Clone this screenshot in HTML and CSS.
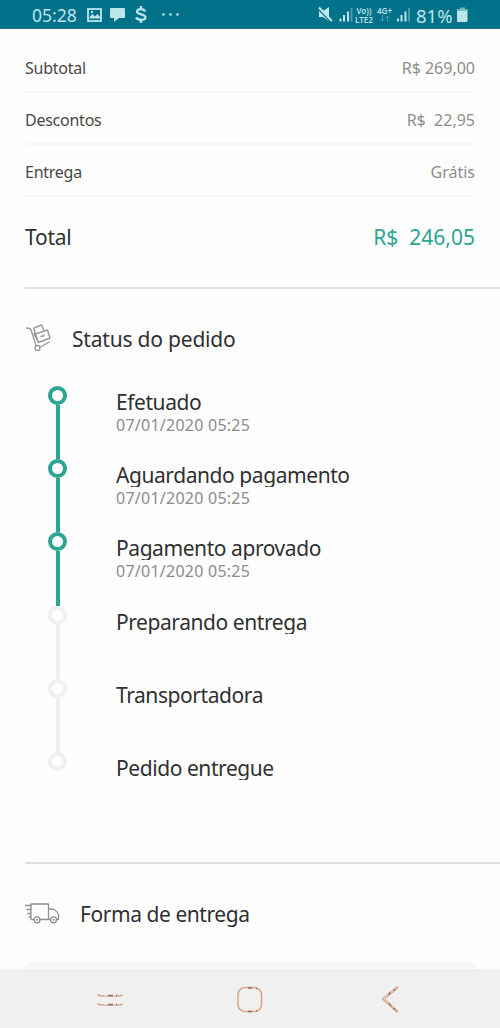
FILE: index.html
```html
<!DOCTYPE html>
<html lang="pt-BR">
<head>
<meta charset="utf-8">
<title>Status do pedido</title>
<link rel="stylesheet" href="styles.css">
</head>
<body>
<div class="screen">
  <header class="statusbar">
    <span class="clock">05:28</span>
    <svg class="notifications" width="98" height="28" viewBox="0 0 98 28" fill="none">
      <rect x="1" y="9" width="13" height="12" stroke="#bce5ec" stroke-width="1.800"/>
      <path d="M2.500 18.500V17l3-3 2.500 2.500 2.500-2.500 2.500 3v1.500z" fill="#bce5ec"/><circle cx="5" cy="12" r="1.200" fill="#bce5ec"/>
      <path d="M24 8h13q1 0 1 1v8q0 1-1 1h-5l-5 4v-4h-3q-1 0-1-1V9q0-1 1-1z" fill="#bce5ec"/>
      <path d="M58 11.500C57 8.500 50 8.300 50 11.500S58.500 14 58.500 17.400 51 20.500 49 17.500M54 6v3M54 20v3" stroke="#bce5ec" stroke-width="2.300"/>
      <g fill="#bce5ec"><circle cx="76.500" cy="14.500" r="1.300"/><circle cx="83.500" cy="14.500" r="1.300"/><circle cx="90.500" cy="14.500" r="1.300"/></g>
    </svg>
    <svg class="signal" width="36" height="28" viewBox="0 0 36 28" fill="none">
      <path d="M1 11h4l6-4v14l-6-4H1z" fill="#bce5ec"/>
      <path d="M0 9l13 13" stroke="#02718a" stroke-width="1.500"/><path d="M1 7.500l13 13.500" stroke="#bce5ec" stroke-width="2"/>
      <path d="M22.500 18.500v3M26 15v6.500M30 11.500v10" stroke="#bce5ec" stroke-width="2"/><path d="M33.500 8v13.500" stroke="#4b9dac" stroke-width="2"/>
    </svg>
    <span class="network volte"><span>Vo))</span><span>LTE2</span></span>
    <span class="network data"><span>4G+</span>
      <svg width="10" height="7" viewBox="0 0 10 7" fill="none" stroke="#4b9dac"><path d="M2.500 0v6M.5 4l2 2 2-2M7.500 7V1M5.500 3l2-2 2 2"/></svg>
    </span>
    <svg class="bars" width="14" height="28" viewBox="0 0 14 28" fill="none">
      <path d="M1 18.500v3M4.500 15v6.500M8.500 11.500v10" stroke="#bce5ec" stroke-width="2"/><path d="M12 8v13.500" stroke="#4b9dac" stroke-width="2"/>
    </svg>
    <span class="charge">81%</span>
    <svg class="battery" width="11" height="28" viewBox="0 0 11 28"><path d="M3 7.500h5V10H3z" fill="#6fb5c1"/><rect x="0" y="9" width="10.500" height="13" rx="1" fill="#bce5ec"/><path d="M0 9h10.500v2H0z" fill="#75b9c5"/></svg>
  </header>

  <main class="content">
    <section class="summary">
      <div class="line"><span class="label">Subtotal</span><span class="amount">R$ 269,00</span></div>
      <div class="line"><span class="label">Descontos</span><span class="amount">R$&nbsp; 22,95</span></div>
      <div class="line"><span class="label">Entrega</span><span class="amount">Grátis</span></div>
      <div class="total"><span class="label">Total</span><span class="grand">R$&nbsp; 246,05</span></div>
    </section>

    <section class="panel order">
      <div class="heading">
        <svg width="27" height="30" viewBox="0 0 27 30" fill="none" stroke="#999" stroke-width="1.400" stroke-linejoin="round" stroke-linecap="round">
          <path d="M1.500 4l3 .5q1 .3 1.500 1.500L11 21.500M14.500 23.500L24.500 18"/><circle cx="12.500" cy="24" r="2.500"/>
          <path d="M10.500 10L22.500 6 25 14 13.500 18.500zM10 9.500L9 4 16.500 .8 19 6.800M16 12.500l3-1M9 10l4.500 8.500"/>
        </svg>
        <h2>Status do pedido</h2>
      </div>
      <ol class="timeline">
        <li class="step done"><span class="track"><i class="dot"></i></span><div><h3>Efetuado</h3><time>07/01/2020 05:25</time></div></li>
        <li class="step done"><span class="track"><i class="dot"></i></span><div><h3>Aguardando pagamento</h3><time>07/01/2020 05:25</time></div></li>
        <li class="step done"><span class="track"><i class="dot"></i></span><div><h3>Pagamento aprovado</h3><time>07/01/2020 05:25</time></div></li>
        <li class="step"><span class="track"><i class="dot"></i></span><div><h3>Preparando entrega</h3></div></li>
        <li class="step"><span class="track"><i class="dot"></i></span><div><h3>Transportadora</h3></div></li>
        <li class="step last"><span class="track"><i class="dot"></i></span><div><h3>Pedido entregue</h3></div></li>
      </ol>
    </section>

    <section class="panel delivery">
      <div class="heading">
        <svg width="35" height="24" viewBox="0 0 35 24" fill="none" stroke="#8f8f8f" stroke-width="1.300" stroke-linejoin="round">
          <path d="M9 17.500H6V2h17.500v15.500H15M23.500 7h4.500q5 2.500 5.500 6v4.500h-2M23.500 17.500h2M0 3.500h6M1.500 7.500H6M2.500 11.500H6M4 15h2"/>
          <circle cx="12" cy="17.800" r="3"/><circle cx="28.500" cy="17.800" r="3"/><circle cx="12" cy="17.800" r=".4"/><circle cx="28.500" cy="17.800" r=".4"/>
        </svg>
        <h2>Forma de entrega</h2>
      </div>
      <div class="card"></div>
    </section>
  </main>

  <nav class="navbar">
    <svg width="500" height="59" viewBox="0 0 500 59" fill="none">
      <g stroke="#d2a78f" stroke-width="1.700" stroke-linecap="round">
        <path d="M98 26q2 1 4 1h17q2 0 3-1M98 35q2 1 4 1h17q2 0 3-1"/>
        <rect x="238" y="18.500" width="23.500" height="24" rx="7"/>
        <path d="M397 18.500L383.500 30 397 42.500" stroke-width="2.500"/>
      </g>
      <g stroke="#f1d8c7" stroke-width="1"><path d="M104 26.500h13M104 35.500h13"/><rect x="239" y="19.500" width="21.500" height="22" rx="6"/><path d="M396 19L384 30 396 41.500"/></g>
      <g stroke="#8a7168" stroke-width="1.300"><path d="M108 26.500h5M108 35.500h5M116 26.500h1M116 35.500h1M248 19h4M256 19.500h1M248 42.500h4M256 42h1M390 23l-1 3M394 20l1 2M389 34l2 3M394 39l1 2"/></g>
    </svg>
  </nav>
</div>
</body>
</html>
```
FILE: styles.css
```css
* { box-sizing: border-box; }
body { margin: 0; background: #fefefe; font-family: "Noto Sans", sans-serif; color: #303030; }
h2, h3, ol { margin: 0; padding: 0; font-weight: 400; }
svg { display: block; flex: none; }
.screen { width: 500px; height: 1028px; display: flex; flex-direction: column; overflow: hidden; }

.statusbar { flex: none; height: 29px; display: flex; align-items: flex-start; padding-left: 32px; background: #02718a; border-bottom: 1px solid #1e7384; color: #bce5ec; white-space: nowrap; }
.clock { width: 55px; font-size: 17.500px; line-height: 31px; }
.signal { margin-left: 133px; }
.network { display: flex; flex-direction: column; font-size: 8px; font-weight: 600; line-height: 9px; padding-top: 6px; }
.volte { width: 22px; margin-left: -1px; align-items: center; }
.data { width: 17px; margin-left: 1px; align-items: center; }
.bars { margin-left: 4px; }
.charge { width: 41px; margin-left: 5px; font-size: 18.500px; line-height: 31px; }

.content { flex: 1; min-height: 0; overflow: hidden; padding: 12px 0 0 25px; }
.summary { padding-right: 25px; }
.line { height: 52px; display: flex; justify-content: space-between; border-bottom: 2px solid #f8f8f8; font-size: 16px; line-height: 54px; color: #484848; }
.label { letter-spacing: -.25px; }
.amount { color: #8d8d8d; }
.total { height: 90px; display: flex; justify-content: space-between; font-size: 21px; line-height: 80px; }
.grand { color: #2da590; }

.panel { border-top: 2px solid #dfdfdf; }
.heading { display: flex; align-items: center; }
.heading h2 { font-size: 21px; line-height: 30px; white-space: nowrap; }
.order { height: 575px; padding-top: 35px; }
.order .heading { gap: 20px; letter-spacing: -.2px; }

.timeline { list-style: none; padding: 32px 0 0 23px; }
.step { height: 73.200px; display: flex; gap: 49px; }
.track { flex: none; width: 19px; display: flex; flex-direction: column; align-items: center; }
.track::after { content: ""; width: 4px; flex: 1; background: #efefef; }
.done .track::after { background: #2da590; }
.last .track::after { display: none; }
.dot { flex: none; width: 19px; height: 19px; border: 4px solid #eff0f0; border-radius: 50%; }
.done .dot { border-color: #2da590; }
.step h3 { height: 28px; padding-top: 1px; font-size: 21px; line-height: 30px; letter-spacing: -.43px; overflow: hidden; white-space: nowrap; }
.step time { display: block; font-size: 16px; line-height: 22px; letter-spacing: .25px; color: #8b8b8b; white-space: nowrap; }

.delivery { padding-top: 35px; }
.delivery .heading { gap: 20px; letter-spacing: -.44px; }
.card { height: 60px; margin: 33px 25px 0 0; border-radius: 6px; background: #f7f7f7; }
.navbar { flex: none; height: 59px; background: #f0f0f0; }
```
